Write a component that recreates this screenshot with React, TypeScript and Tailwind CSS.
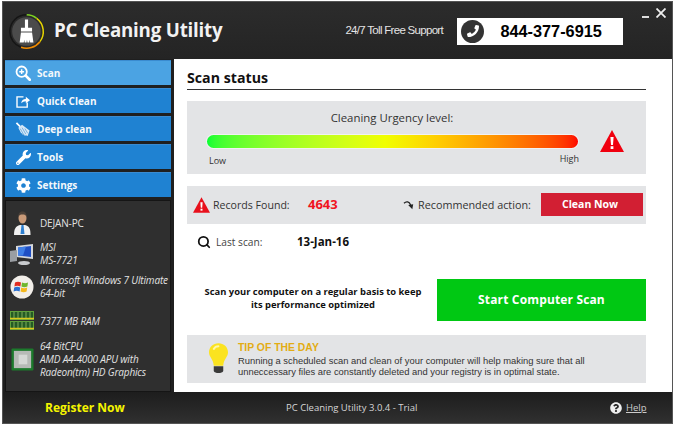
import React from "react";
import { FaCog, FaPhoneAlt, FaQuestionCircle, FaWrench } from "react-icons/fa";
import { FiSearch } from "react-icons/fi";

const ScanIcon = () => (
  <svg viewBox="0 0 18 18" className="w-[16px] h-[16px]" fill="none" stroke="white">
    <circle cx="7.5" cy="7.5" r="5.8" strokeWidth="2" />
    <path d="M12 12l4.6 4.6" strokeWidth="3" strokeLinecap="round" />
    <path d="M4.8 7.5h5.4M7.5 4.8v5.4" strokeWidth="1.6" />
  </svg>
);

const QuickCleanIcon = () => (
  <svg viewBox="0 0 16 14" className="w-[15px] h-[13px]" fill="none" stroke="white">
    <path d="M12 8v5H1V2h7" strokeWidth="1.5" />
    <path d="M5.5 9c.3-3 2.3-4.6 5-4.6V2l4.5 3.6-4.5 3.4V6.6c-2 0-3.6.8-5 2.4z" fill="white" stroke="none" />
  </svg>
);

const DeepCleanIcon = () => (
  <svg viewBox="0 0 16 16" className="w-[16px] h-[15px]">
    <path d="M1 1l4 4" stroke="white" strokeWidth="1.8" />
    <path d="M3 6l4-3 8 6-2 6-2-1-1 1-1-2-1 1-1-2-1 0z" fill="#d6e8f7" />
    <path d="M5 7l4 7M7 6l4 7M10 7l3 5" stroke="#5a9dd6" strokeWidth="0.8" />
  </svg>
);

const WarningIcon = ({ className }: { className: string }) => (
  <svg viewBox="0 0 24 22" className={className}>
    <path d="M12 0l12 22H0z" fill="currentColor" />
    <path d="M10.4 7h3.2l-.6 8h-2z" fill="white" />
    <rect x="10.6" y="16.200" width="2.800" height="2.800" fill="white" />
  </svg>
);

const LogoIcon = () => (
  <svg viewBox="0 0 40 40" className="w-[37px] h-[37px]" fill="none">
    <circle cx="20" cy="20" r="18" fill="#2a2a2a" />
    <circle cx="20" cy="20" r="15.5" fill="#4b4b4b" />
    <path d="M20 2a18 18 0 0 1 11 3.800" stroke="#7ed321" strokeWidth="1.600" />
    <path d="M31 5.800A18 18 0 0 1 34.500 31" stroke="#e8d500" strokeWidth="1.600" />
    <path d="M34.500 31A18 18 0 0 1 14 37" stroke="#f08a00" strokeWidth="1.800" />
    <path d="M14 37A18 18 0 0 1 2 20 18 18 0 0 1 20 2" stroke="#151515" strokeWidth="1.600" />
    <path d="M18.300 7h3.400v9h4.300v4H14v-4h4.300z" fill="white" />
    <path d="M14 21h12l1.500 11H24l-.6-3-.4 3h-2l-.5-3-.5 3h-2l-.4-3-.6 3h-4.400z" fill="white" />
  </svg>
);

const PersonIcon = () => (
  <svg viewBox="0 0 24 24" className="w-[24px] h-[24px]">
    <path d="M4 24c0-6 1.500-9 6-10h5c4.500 1 5.500 4 5.500 10z" fill="#f1f1f1" />
    <path d="M11.500 14h2l1 9h-4z" fill="#2d7fd0" />
    <ellipse cx="12.500" cy="7" rx="4" ry="5.600" fill="#c99a78" />
    <path d="M8.300 6c0-4 1.700-5.500 4.200-5.500S16.700 2 16.700 6c-1-2-2-2.500-4.200-2.500S9.300 4 8.300 6z" fill="#4a4038" />
  </svg>
);

const MonitorIcon = () => (
  <svg viewBox="0 0 24 24" className="w-[24px] h-[24px]">
    <path d="M6 4l17-2v15L6 15z" fill="#d5d8dc" />
    <path d="M8 5.500l13-1.500v11L8 13.500z" fill="#1f4fc4" />
    <path d="M8 5.500l8-1-3 9-5 0z" fill="#3f7fe6" />
    <path d="M0 9l7-1v11l-7 1z" fill="#9a9ea3" />
    <ellipse cx="14" cy="21" rx="6" ry="2" fill="#c8cacd" />
  </svg>
);

const WindowsIcon = () => (
  <svg viewBox="0 0 24 24" className="w-[24px] h-[24px]">
    <circle cx="12" cy="12" r="11.500" fill="#f2eee9" />
    <path d="M5 7.500c2-1 4-1 6 0l-.6 4c-2-1-4-1-6 0z" fill="#e02b20" />
    <path d="M12 7.500c2 1 4 1 6 0l-.6 4c-2 1-4 1-6 0z" fill="#6fb62c" />
    <path d="M4.200 12.500c2-1 4-1 6 0l-.6 4c-2-1-4-1-6 0z" fill="#2a6fd0" />
    <path d="M11.200 12.500c2 1 4 1 6 0l-.6 4c-2 1-4 1-6 0z" fill="#f5b81c" />
  </svg>
);

const RamIcon = () => (
  <svg viewBox="0 0 24 20" className="w-[24px] h-[20px]">
    <rect x="0.500" y="0.500" width="23" height="8" fill="#245c24" stroke="#5fa03a" />
    <rect x="0.500" y="10.500" width="23" height="8" fill="#245c24" stroke="#5fa03a" />
    <path d="M0 7.500h24M0 17.500h24" stroke="#d9c81e" strokeWidth="1.400" />
    <path d="M4 1v6M8 1v6M12 1v6M16 1v6M20 1v6M4 11v6M8 11v6M12 11v6M16 11v6M20 11v6" stroke="#9bc06a" strokeWidth="0.800" />
  </svg>
);

const CpuIcon = () => (
  <svg viewBox="0 0 24 24" className="w-[23px] h-[23px]">
    <rect x="0.500" y="0.500" width="23" height="23" rx="1" fill="#1c7a2c" />
    <rect x="3" y="3" width="18" height="18" fill="#b6bab6" />
    <rect x="8" y="7" width="9" height="10" fill="#d5d8d5" />
  </svg>
);

const BulbIcon = () => (
  <svg viewBox="0 0 20 33" className="w-[19px] h-[32px]">
    <path d="M10 0c5.500 0 10 4 10 9.500 0 5-4.500 7-5 14H5c-.5-7-5-9-5-14C0 4 4.500 0 10 0z" fill="#fbe320" />
    <path d="M5 6c1-2 3-3 5-3" stroke="#fff7a8" strokeWidth="2" fill="none" strokeLinecap="round" />
    <path d="M5 24h10v5c-1 3-9 3-10 0z" fill="#3a3a3a" />
  </svg>
);

const navItems = [
  { label: "Scan", icon: <ScanIcon />, active: true },
  { label: "Quick Clean", icon: <QuickCleanIcon /> },
  { label: "Deep clean", icon: <DeepCleanIcon /> },
  { label: "Tools", icon: <FaWrench className="w-[15px] h-[15px] text-white" /> },
  { label: "Settings", icon: <FaCog className="w-[15px] h-[15px] text-white" /> },
];

const sysInfo = [
  { icon: <PersonIcon />, lines: ["DEJAN-PC"], plain: true, h: "h-[30px]" },
  { icon: <MonitorIcon />, lines: ["MSI", "MS-7721"], h: "h-[31px]" },
  { icon: <WindowsIcon />, lines: ["Microsoft Windows 7 Ultimate", "64-bit"], h: "h-[35px]" },
  { icon: <RamIcon />, lines: ["7377 MB RAM"], h: "h-[34px]" },
  { icon: <CpuIcon />, lines: ["64 BitCPU", "AMD A4-4000 APU with", "Radeon(tm) HD Graphics"], h: "h-[42px]" },
];

export default function App() {
  return (
    <div className="w-[675px] h-[425px] bg-white pt-px px-[2px] pb-px font-['Open_Sans','Noto_Sans',sans-serif]">
      <div className="h-full flex flex-col bg-[#222] border border-[#555]">
        {/* Header */}
        <div className="h-[57px] shrink-0 flex items-center bg-gradient-to-b from-[#2c2c2c] to-[#242424] relative">
          <div className="ml-[5px] mt-[2px]"><LogoIcon /></div>
          <span className="ml-[9px] text-[18.7px] font-bold text-[#f2f2f2] tracking-[-0.2px] whitespace-nowrap">PC Cleaning Utility</span>
          <span className="ml-[123px] mt-[1px] w-[99px] text-[11.5px] tracking-[-0.7px] text-[#e4e4e4] whitespace-nowrap font-['Liberation_Sans',sans-serif]">24/7 Toll Free Support</span>
          <div className="ml-[13px] mt-[1px] w-[166px] h-[27px] shrink-0 bg-white flex items-center">
            <div className="ml-[4px] w-[23px] h-[23px] rounded-full bg-[#333] flex items-center justify-center">
              <FaPhoneAlt className="w-[12px] h-[12px] text-white scale-x-[-1]" />
            </div>
            <span className="ml-[16px] text-[16.3px] font-bold text-black font-['Liberation_Sans',sans-serif]">844-377-6915</span>
          </div>
          <div className="absolute right-[23px] top-[14px] w-[7px] h-[2px] bg-[#ddd]" />
          <span className="absolute right-[6px] top-[6px] text-[#eee]">
            <svg viewBox="0 0 10 10" className="w-[10px] h-[10px]" stroke="currentColor" strokeWidth="1.800"><path d="M0.500 0.500l9 9M9.500 0.500l-9 9" /></svg>
          </span>
        </div>

        {/* Body */}
        <div className="flex-1 flex min-h-0">
          <div className="w-[171px] shrink-0 pl-[2px] pr-[3px] pt-[1px] flex flex-col gap-[3px] bg-[#1f1f1f]">
            {navItems.map((item) => (
              <div
                key={item.label}
                className={`h-[25px] shrink-0 flex items-center border-t border-[#3a8bd0] ${
                  item.active ? "bg-[#4ba3e3]" : "bg-[#1f82d2]"
                }`}
              >
                <span className="w-[32px] flex justify-center pl-[4px] shrink-0">{item.icon}</span>
                <span className="text-[10px] font-bold text-[#f4f8fb]">{item.label}</span>
              </div>
            ))}
            <div className="flex-1 min-h-0 bg-[#2f2f2f] border border-[#151515] pt-[7px] pl-[4px]">
              {sysInfo.map((row) => (
                <div key={row.lines[0]} className={`flex items-center gap-[6px] ${row.h}`}>
                  <span className="w-[24px] shrink-0 flex justify-center">{row.icon}</span>
                  <div className={`text-[10px] leading-[13px] tracking-[-0.15px] text-[#e2e2e2] whitespace-nowrap ${row.plain ? "" : "italic"}`}>
                    {row.lines.map((l) => <div key={l}>{l}</div>)}
                  </div>
                </div>
              ))}
            </div>
          </div>

          {/* Content */}
          <div className="flex-1 bg-white pl-[13px] pr-[26px] pt-[9px]">
            <div className="border-b border-[#333] h-[22px] text-[14.2px] leading-[19px] font-bold text-[#111]">Scan status</div>

            <div className="mt-[11px] h-[73px] bg-[#e3e4e6] pt-[8px] flex flex-col">
              <div className="text-center text-[11.4px] text-[#333] pr-[49px] leading-[16px] pt-[1px]">Cleaning Urgency level:</div>
              <div className="flex items-start">
                <div className="ml-[20px] mt-[9px] w-[371px] h-[13px] rounded-full bg-gradient-to-r from-[#00ff33] via-[#f0ff00] via-48% to-[#ff0000] to-100% shadow-[0_0_0_1px_#f2f2f2]" />
                <WarningIcon className="ml-[22px] mt-[4px] w-[24px] h-[22px] text-[#f0000f]" />
              </div>
              <div className="px-[22px] pr-[67px] flex justify-between text-[9px] text-[#333]">
                <span className="mt-[2px]">Low</span>
                <span>High</span>
              </div>
            </div>

            <div className="mt-[12px] h-[38px] bg-[#e3e4e6] flex items-center">
              <WarningIcon className="ml-[6px] w-[17px] h-[16px] -mt-[1px] text-[#e8101c]" />
              <span className="ml-[3px] mt-[1px] w-[95px] text-[10.6px] text-[#333] whitespace-nowrap">Records Found:</span>
              <span className="w-[95px] text-[13px] font-bold text-[#f0141e]">4643</span>
              <svg viewBox="0 0 14 12" className="w-[12px] h-[10px]" fill="none">
                <path d="M1 4c3-3 6-2 8 2" stroke="#222" strokeWidth="1.600" />
                <path d="M6 6l6-1-1 6z" fill="#222" />
              </svg>
              <span className="ml-[3px] w-[123px] text-[10.8px] text-[#333] whitespace-nowrap">Recommended action:</span>
              <div className="w-[102px] h-[23px] -mt-[2px] pt-[1px] pr-[4px] bg-[#d21f33] text-white text-[10.500px] font-bold flex items-center justify-center">Clean Now</div>
            </div>

            <div className="mt-[8px] h-[20px] flex items-center">
              <FiSearch className="ml-[10px] w-[14px] h-[14px] text-[#111] stroke-[3]" />
              <span className="ml-[5px] mt-[2px] w-[81px] text-[10.2px] text-[#444]">Last scan:</span>
              <span className="text-[11.500px] font-bold text-[#111]">13-Jan-16</span>
            </div>

            <div className="mt-[27px] h-[42px] flex items-center">
              <div className="w-[250px] pl-[2px] pb-[5px] text-center text-[9.400px] leading-[13px] font-bold text-[#111]">
                Scan your computer on a regular basis to keep<br />its performance optimized
              </div>
              <div className="w-[209px] h-[42px] bg-[#00c813] text-white text-[12px] font-bold tracking-[0.15px] flex items-center justify-center">Start Computer Scan</div>
            </div>

            <div className="mt-[14px] h-[48px] bg-[#e3e4e6] flex items-center font-['Liberation_Sans',sans-serif]">
              <span className="ml-[22px] -mt-[1px]"><BulbIcon /></span>
              <div className="ml-[10px] mt-[1px]">
                <div className="text-[10.400px] leading-[12px] font-bold text-[#e2ac14]">TIP OF THE DAY</div>
                <div className="text-[9.400px] leading-[11px] text-[#333] mt-[1px]">
                  Running a scheduled scan and clean of your computer will help making sure that all<br />
                  unneccessary files are constantly deleted and your registry is in optimal state.
                </div>
              </div>
            </div>
          </div>
        </div>

        {/* Footer */}
        <div className="h-[31px] shrink-0 pt-[1px] flex items-center bg-gradient-to-b from-[#1d1d1d] to-[#303030]">
          <span className="ml-[42px] w-[81px] text-[12px] font-bold text-[#f5f500] whitespace-nowrap">Register Now</span>
          <span className="ml-[160px] w-[130px] text-[9.500px] text-[#d6d6d6] whitespace-nowrap">PC Cleaning Utility 3.0.4 - Trial</span>
          <FaQuestionCircle className="ml-[194px] w-[12px] h-[12px] text-[#eee]" />
          <span className="ml-[4px] text-[9.500px] underline text-[#ccc]">Help</span>
        </div>
      </div>
    </div>
  );
}
